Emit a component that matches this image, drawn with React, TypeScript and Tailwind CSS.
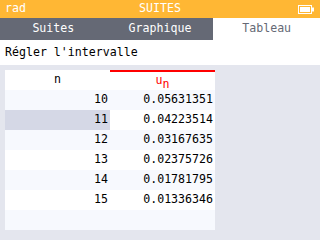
import React from "react";

const rows: [string, string][] = [
  ["10", "0.05631351"],
  ["11", "0.04223514"],
  ["12", "0.03167635"],
  ["13", "0.02375726"],
  ["14", "0.01781795"],
  ["15", "0.01336346"],
  ["", ""],
];

export default function App() {
  return (
    <div
      className="w-[320px] h-[240px] overflow-hidden bg-[#e4e6ee] text-[11.6px] leading-none text-black"
      style={{ fontFamily: '"DejaVu Sans Mono", monospace' }}
    >
      <div className="h-[18px] bg-[#ffb734] text-white grid grid-cols-3 items-center px-[5px]">
        <span>rad</span>
        <span className="text-center">SUITES</span>
        <span className="flex justify-end pr-[1px]">
          <svg width="16" height="9" viewBox="0 0 16 9">
            <rect x="0.5" y="0.5" width="13" height="8" fill="none" stroke="white" />
            <rect x="2" y="2" width="10" height="5" fill="white" />
            <rect x="14" y="2.5" width="2" height="4" fill="white" />
          </svg>
        </span>
      </div>
      <div className="h-[22px] bg-[#656975] flex">
        <div className="flex-1 flex items-center justify-center text-white">Suites</div>
        <div className="flex-1 flex items-center justify-center text-white">Graphique</div>
        <div className="flex-1 flex items-center justify-center bg-white text-[#656975]">Tableau</div>
      </div>
      <div className="h-[25px] bg-white flex items-center px-[5px]">Régler l'intervalle</div>
      <div className="pt-[5px] px-[5px]">
        <div className="w-[210px]">
          <div className="flex h-[20px] bg-white">
            <div className="w-[105px] flex items-center justify-center">n</div>
            <div className="w-[105px] flex items-center justify-center border-t-2 border-[#ff0000] text-[#ff0000]">
              <span>u</span>
              <span className="relative top-[4px]">n</span>
            </div>
          </div>
          {rows.map(([n, u], i) => {
            const light = i % 2 === 0;
            const rowBg = light ? "bg-[#f7f9fe]" : "bg-white";
            const sel = i === 1;
            return (
              <div key={i} className={`flex h-[20px] ${rowBg}`}>
                <div
                  className={`w-[105px] flex items-center justify-end pr-[2px] ${sel ? "bg-[#d5d8e6]" : ""}`}
                >
                  {n}
                </div>
                <div className="w-[105px] flex items-center justify-end pr-[2px]">{u}</div>
              </div>
            );
          })}
        </div>
      </div>
    </div>
  );
}
